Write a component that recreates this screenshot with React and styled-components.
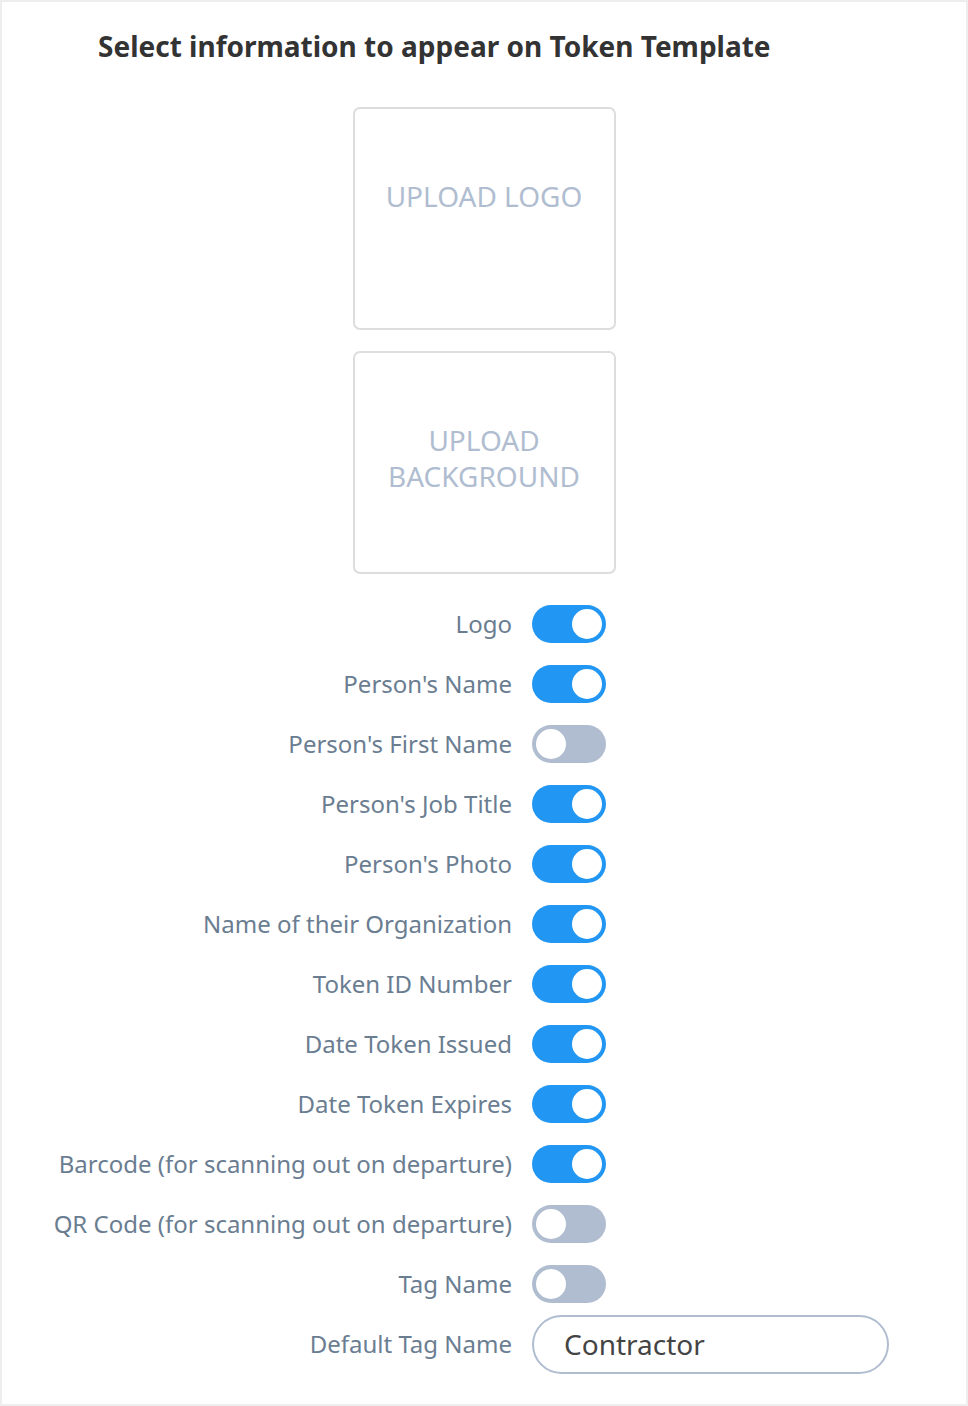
import React, { useState } from 'react';
import styled, { createGlobalStyle } from 'styled-components';

const GlobalStyle = createGlobalStyle`
    html, body {
        margin: 0;
        padding: 0;
        background: #ffffff;
    }
    * {
        box-sizing: border-box;
    }
`;

const Page = styled.div`
    width: 968px;
    height: 1406px;
    border: 2px solid #eeeeee;
    background: #ffffff;
    font-family: "Noto Sans", "Open Sans", sans-serif;
    padding-top: 25px;
`;

const Heading = styled.h2`
    margin: 0 0 0 96px;
    font-size: 28px;
    line-height: 38px;
    font-weight: 700;
    color: #333333;
`;

const UploadColumn = styled.div`
    display: flex;
    flex-direction: column;
    align-items: center;
    gap: 21px;
    margin-top: 42px;
`;

const UploadBox = styled.div`
    width: 263px;
    height: 223px;
    border: 2px solid #dddddd;
    border-radius: 7px;
    padding: 69px 16px 0;
    text-align: center;
    font-size: 28px;
    line-height: 36px;
    color: #b0bdd0;
    cursor: pointer;
`;

const Options = styled.div`
    display: grid;
    grid-template-columns: 510px 1fr;
    grid-auto-rows: 60px;
    column-gap: 20px;
    margin-top: 20px;
`;

const Label = styled.span`
    align-self: center;
    justify-self: end;
    font-size: 24px;
    line-height: 32px;
    color: #6a7d91;
`;

const Control = styled.div`
    display: flex;
    align-items: center;
`;

const Track = styled.button`
    position: relative;
    width: 74px;
    height: 38px;
    padding: 0;
    border: none;
    border-radius: 19px;
    background: ${(p) => (p.$on ? '#2196f3' : '#b0bdd0')};
    cursor: pointer;
`;

const Knob = styled.span`
    position: absolute;
    top: 4px;
    left: ${(p) => (p.$on ? '40px' : '4px')};
    width: 30px;
    height: 30px;
    border-radius: 50%;
    background: #ffffff;
`;

const TextInput = styled.input`
    width: 357px;
    height: 59px;
    border: 2px solid #b0bdd0;
    border-radius: 30px;
    padding: 0 30px;
    font-family: "Noto Sans", "Open Sans", sans-serif;
    font-size: 28px;
    color: #444444;
    outline: none;
`;

const initial = [
    ['Logo', true],
    ["Person's Name", true],
    ["Person's First Name", false],
    ["Person's Job Title", true],
    ["Person's Photo", true],
    ['Name of their Organization', true],
    ['Token ID Number', true],
    ['Date Token Issued', true],
    ['Date Token Expires', true],
    ['Barcode (for scanning out on departure)', true],
    ['QR Code (for scanning out on departure)', false],
    ['Tag Name', false],
];

function Toggle({ on, onClick }) {
    return (
        <Track $on={on} onClick={onClick}>
            <Knob $on={on} />
        </Track>
    );
}

export default function App() {
    const [fields, setFields] = useState(initial);
    const [tagName, setTagName] = useState('Contractor');

    const flip = (index) =>
        setFields((prev) => prev.map((f, i) => (i === index ? [f[0], !f[1]] : f)));

    return (
        <Page>
            <GlobalStyle />
            <Heading>Select information to appear on Token Template</Heading>
            <UploadColumn>
                <UploadBox>UPLOAD LOGO</UploadBox>
                <UploadBox>UPLOAD<br />BACKGROUND</UploadBox>
            </UploadColumn>
            <Options>
                {fields.map(([label, on], index) => (
                    <React.Fragment key={label}>
                        <Label>{label}</Label>
                        <Control>
                            <Toggle on={on} onClick={() => flip(index)} />
                        </Control>
                    </React.Fragment>
                ))}
                <Label>Default Tag Name</Label>
                <Control>
                    <TextInput value={tagName} onChange={(e) => setTagName(e.target.value)} />
                </Control>
            </Options>
        </Page>
    );
}
